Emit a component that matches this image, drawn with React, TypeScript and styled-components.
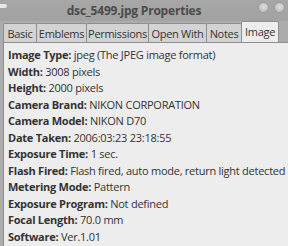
import { createGlobalStyle } from "styled-components";
import styled from "styled-components";

const GlobalStyle = createGlobalStyle`
  html, body {
    margin: 0;
    padding: 0;
    background: #a9a9a9;
    overflow: hidden;
  }
`;

const Window = styled.div`
  width: 288px;
  height: 246px;
  display: flex;
  flex-direction: column;
  background: #acacac;
  font-family: "Open Sans", "DejaVu Sans", sans-serif;
  color: #3c3c3c;
  overflow: hidden;
`;

const TitleBar = styled.div`
  height: 21px;
  position: relative;
  display: flex;
  align-items: center;
  justify-content: center;
  background: linear-gradient(#a7a7a7, #a2a2a2);
`;

const Title = styled.span`
  font-size: 12px;
  font-weight: 700;
  color: #4b4b4b;
  letter-spacing: -0.2px;
  margin-left: -20px;
`;

const Knob = styled.div`
  position: absolute;
  left: -4px;
  top: 4px;
  width: 11px;
  height: 4px;
  border-radius: 2px;
  background: #e8e8e8;
`;

const Controls = styled.div`
  position: absolute;
  right: 3px;
  top: 2px;
  display: flex;
  gap: 5px;
`;

const Dot = styled.div`
  width: 9px;
  height: 9px;
  border-radius: 50%;
  background: radial-gradient(circle at 50% 40%, #dcdcdc, #b8b8b8);
  border: 1px solid #9a9a9a;
`;

const TabRow = styled.div`
  display: flex;
  align-items: flex-end;
  padding-left: 3px;
  height: 21px;
`;

const Tab = styled.div<{ $active?: boolean; $w: number }>`
  width: ${(p) => p.$w}px;
  height: ${(p) => (p.$active ? "21px" : "19px")};
  box-sizing: border-box;
  padding-bottom: ${(p) => (p.$active ? "2px" : "0")};
  display: flex;
  align-items: center;
  justify-content: center;
  font-size: 11px;
  letter-spacing: -0.3px;
  white-space: nowrap;
  border: 1px solid #8e8e8e;
  border-bottom: none;
  margin-right: -1px;
  border-radius: 2px 2px 0 0;
  background: ${(p) => (p.$active ? "#ededed" : "#d3d3d3")};
  color: #333;
`;

const Panel = styled.div`
  flex: 1;
  margin-left: 3px;
  border-left: 1px solid #8e8e8e;
  border-top: 1px solid #8e8e8e;
  background: #ededed;
  padding: 4px 0 0 4px;
  display: flex;
  flex-direction: column;
`;

const Line = styled.div`
  font-size: 11px;
  line-height: 16.5px;
  letter-spacing: -0.25px;
  white-space: nowrap;
  color: #333;
`;

const Label = styled.b`
  font-weight: 700;
`;

const tabs: [string, number][] = [
  ["Basic", 34],
  ["Emblems", 51],
  ["Permissions", 63],
  ["Open With", 59],
  ["Notes", 36],
  ["Image", 38],
];

const rows: [string, string][] = [
  ["Image Type:", "jpeg (The JPEG image format)"],
  ["Width:", "3008 pixels"],
  ["Height:", "2000 pixels"],
  ["Camera Brand:", "NIKON CORPORATION"],
  ["Camera Model:", "NIKON D70"],
  ["Date Taken:", "2006:03:23 23:18:55"],
  ["Exposure Time:", "1 sec."],
  ["Flash Fired:", "Flash fired, auto mode, return light detected"],
  ["Metering Mode:", "Pattern"],
  ["Exposure Program:", "Not defined"],
  ["Focal Length:", "70.0 mm"],
  ["Software:", "Ver.1.01"],
];

export default function App() {
  return (
    <Window>
      <GlobalStyle />
      <TitleBar>
        <Knob />
        <Title>dsc_5499.jpg Properties</Title>
        <Controls>
          <Dot />
          <Dot />
        </Controls>
      </TitleBar>
      <TabRow>
        {tabs.map(([t, w]) => (
          <Tab key={t} $w={w} $active={t === "Image"}>
            {t}
          </Tab>
        ))}
      </TabRow>
      <Panel>
        {rows.map(([k, v]) => (
          <Line key={k}>
            <Label>{k}</Label> {v}
          </Line>
        ))}
      </Panel>
    </Window>
  );
}
